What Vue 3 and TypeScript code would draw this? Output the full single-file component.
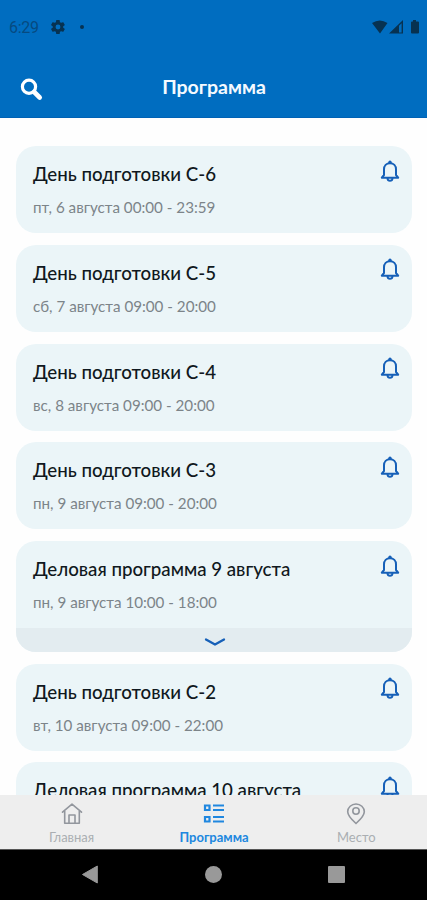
<script setup lang="ts">
interface Session {
  title: string
  time: string
  expandable?: boolean
}

const sessions: Session[] = [
  { title: 'День подготовки С-6', time: 'пт, 6 августа 00:00 - 23:59' },
  { title: 'День подготовки С-5', time: 'сб, 7 августа 09:00 - 20:00' },
  { title: 'День подготовки С-4', time: 'вс, 8 августа 09:00 - 20:00' },
  { title: 'День подготовки С-3', time: 'пн, 9 августа 09:00 - 20:00' },
  { title: 'Деловая программа 9 августа', time: 'пн, 9 августа 10:00 - 18:00', expandable: true },
  { title: 'День подготовки С-2', time: 'вт, 10 августа 09:00 - 22:00' },
  { title: 'Деловая программа 10 августа', time: '' },
]
</script>

<template>
  <div class="screen">
    <header class="top">
      <div class="status">
        <span class="clock">6:29</span>
        <svg class="gear" width="14" height="14" viewBox="2 2 20 20">
          <path fill="currentColor" fill-rule="evenodd" d="M19.4 13a7.5 7.5 0 0 0 0-2l2.1-1.6a.5.5 0 0 0 .1-.6l-2-3.5a.5.5 0 0 0-.6-.2l-2.5 1a7.3 7.3 0 0 0-1.7-1l-.4-2.7a.5.5 0 0 0-.5-.4h-4a.5.5 0 0 0-.5.4L9 5.1a7.3 7.3 0 0 0-1.7 1l-2.5-1a.5.5 0 0 0-.6.2l-2 3.5a.5.5 0 0 0 .1.6L4.5 11a7.5 7.5 0 0 0 0 2l-2.2 1.6a.5.5 0 0 0-.1.6l2 3.5c.1.2.4.3.6.2l2.5-1c.5.4 1.1.7 1.7 1l.4 2.7c0 .2.2.4.5.4h4c.3 0 .5-.2.5-.4l.4-2.7c.6-.3 1.2-.6 1.7-1l2.5 1c.2.1.5 0 .6-.2l2-3.5a.5.5 0 0 0-.1-.6zM12 15.500a3.5 3.5 0 1 1 0-7 3.5 3.5 0 0 1 0 7z" />
        </svg>
        <span class="dot"></span>
        <svg class="signals" width="48" height="15" viewBox="0 0 48 15">
          <path fill="currentColor" d="M0 3Q7.800-2 15.500 3L8 13.500zM17 13.500 31 0V13.500z" />
          <path fill="#006dc0" d="M27 5.800 29.600 3.300V12.500H27z" />
          <path fill="currentColor" d="M41 0h3v1.500h2q1 0 1 1v10q0 1-1 1h-6q-1 0-1-1v-10q0-1 1-1h1z" />
        </svg>
      </div>
      <div class="bar">
        <svg class="search" width="23" height="23" viewBox="0 0 23 23">
          <circle cx="9" cy="8.700" r="6.600" fill="none" stroke="#fff" stroke-width="3.200" />
          <path d="m14.200 14 5.500 5.500" stroke="#fff" stroke-width="4.600" stroke-linecap="round" />
        </svg>
        <h1>Программа</h1>
      </div>
    </header>

    <main class="list">
      <article v-for="item in sessions" :key="item.title" class="card">
        <div class="body">
          <h2>{{ item.title }}</h2>
          <p v-if="item.time">{{ item.time }}</p>
          <svg class="bell" width="20" height="23" viewBox="0 0 20 23">
            <path fill="none" stroke="#1660b8" stroke-width="2" stroke-linejoin="round" stroke-linecap="round" d="M4 15V9.300C4 5.600 6.400 3.200 10 3.200s6 2.400 6 6.100V15l2.200 2.700H1.800zM7.500 18.500c.3 3.100 4.700 3.100 5 0" />
            <circle cx="10" cy="2.300" r="1.700" fill="#1660b8" />
          </svg>
        </div>
        <div v-if="item.expandable" class="more">
          <svg width="22" height="10" viewBox="0 0 22 10">
            <path d="m2 2.500 9 5L20 2.500" fill="none" stroke="#1660b8" stroke-width="2.300" stroke-linecap="round" stroke-linejoin="round" />
          </svg>
        </div>
      </article>
    </main>

    <nav class="tabs">
      <div class="tab home">
        <svg width="22" height="22" viewBox="0 0 22 22" fill="none" stroke="currentColor" stroke-width="1.600" stroke-linejoin="round" stroke-linecap="round">
          <path d="M1.500 9.200 11 1.200l9.500 8M3.700 8v12.300h14.600V8M8 20v-8h6v8" />
        </svg>
        <span>Главная</span>
      </div>
      <div class="tab active">
        <svg width="22" height="22" viewBox="0 0 22 22" fill="none" stroke="currentColor" stroke-width="2.200">
          <path d="M2 2.500h4.500V7H2zM2 14h4.500v4.500H2zM10 2.500H21M10 7H21M10 14H21M10 18.500H21" />
        </svg>
        <span>Программа</span>
      </div>
      <div class="tab place">
        <svg width="22" height="22" viewBox="0 0 22 22" fill="none" stroke="currentColor" stroke-width="1.600">
          <path d="M11 20.500C6.500 16.500 2.700 12.800 2.700 8.800a8.300 7.800 0 0 1 16.600 0c0 4-3.800 7.700-8.300 11.700z" />
          <circle cx="11" cy="8" r="3.200" />
        </svg>
        <span>Место</span>
      </div>
    </nav>

    <footer class="system">
      <svg width="18" height="20" viewBox="0 0 18 20"><path d="M.5 9.500 15.300 1v17z" fill="#999" stroke="#999" stroke-linejoin="round" /></svg>
      <span class="circle"></span>
      <span class="square"></span>
    </footer>
  </div>
</template>

<style>
body { overflow: hidden; }
</style>

<style scoped>
.screen {
  display: flex;
  flex-direction: column;
  width: 427px;
  height: 900px;
  overflow: hidden;
  background: #fefefe;
  font-family: Lato, "Noto Sans", sans-serif;
}
.top {
  flex: none;
  height: 118px;
  box-sizing: border-box;
  background: #006dc0;
  border-bottom: 1px solid #0062b5;
}
.status {
  display: flex;
  align-items: center;
  height: 54px;
  padding: 0 7px 0 9px;
  color: #073251;
}
.clock {
  width: 42px;
  font: 400 16px/20px Roboto, sans-serif;
  letter-spacing: -0.3px;
  color: #064a80;
  padding-top: 2px;
}
.dot {
  width: 4px;
  height: 4px;
  margin-left: 15px;
  border-radius: 50%;
  background: currentColor;
}
.signals { margin-left: auto; }
.bar {
  display: grid;
  grid-template-columns: 1fr auto 1fr;
  align-items: center;
  height: 64px;
}
.search { margin: 6px 0 0 20px; }
h1 {
  margin: 1px 0 0 1px;
  color: #f4faff;
  font-size: 19.500px;
  line-height: 26px;
  font-weight: 700;
}
.list {
  flex: 1;
  min-height: 0;
  overflow: hidden;
  display: flex;
  flex-direction: column;
  gap: 11.700px;
  padding: 28.300px 15px 0 16px;
}
.card {
  flex: none;
  overflow: hidden;
  border-radius: 20px;
  background: #ebf5f8;
}
.body {
  display: grid;
  grid-template-columns: 1fr 20px;
  grid-template-rows: 26px 20px;
  row-gap: 10px;
  height: 87px;
  box-sizing: border-box;
  padding: 15px 12.500px 0 17px;
}
h2 {
  margin: 0;
  color: #101820;
  font-size: 18.700px;
  line-height: 26px;
  font-weight: 500;
  white-space: nowrap;
}
p {
  grid-row: 2;
  margin: 0;
  color: #7c8489;
  font-size: 15.200px;
  line-height: 20px;
  white-space: nowrap;
}
.bell { grid-column: 2; grid-row: 1; margin-top: -1.500px; }
.more {
  display: flex;
  align-items: center;
  justify-content: center;
  height: 24px;
  padding: 3px 0 0 1px;
  box-sizing: border-box;
  background: #e3ecf0;
}
.tabs {
  flex: none;
  display: grid;
  grid-template-columns: repeat(3, 1fr);
  height: 54px;
  background: #eee;
}
.tab {
  display: flex;
  flex-direction: column;
  align-items: center;
  padding: 8px 0 0 1px;
  color: #92969d;
}
.tab span {
  margin-top: 4px;
  font-size: 13px;
  line-height: 17px;
  color: #aaaeb2;
}
.tab.active, .tab.active span { color: #2087df; }
.tab.active span { font-weight: 700; }
.system {
  flex: none;
  display: grid;
  grid-template-columns: 123px 123px 123px;
  justify-content: center;
  justify-items: center;
  align-items: center;
  height: 51px;
  padding-bottom: 1px;
  background: #000;
  box-sizing: border-box;
  border-top: 1px solid #555;
}
.circle {
  width: 17px;
  height: 17px;
  border-radius: 50%;
  background: #999;
}
.square {
  width: 17px;
  height: 17px;
  border-radius: 1px;
  background: #999;
}
</style>
